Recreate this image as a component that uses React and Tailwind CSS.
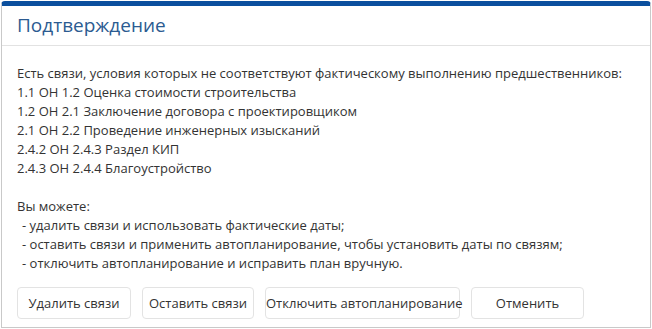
export default function App() {
  const links = [
    "1.1 ОН 1.2 Оценка стоимости строительства",
    "1.2 ОН 2.1 Заключение договора с проектировщиком",
    "2.1 ОН 2.2 Проведение инженерных изысканий",
    "2.4.2 ОН 2.4.3 Раздел КИП",
    "2.4.3 ОН 2.4.4 Благоустройство",
  ];
  const options = [
    "- удалить связи и использовать фактические даты;",
    "- оставить связи и применить автопланирование, чтобы установить даты по связям;",
    "- отключить автопланирование и исправить план вручную.",
  ];
  const btn =
    "h-[32px] rounded-[4px] border border-[#e3e3e3] bg-white text-[13px] text-[#333] whitespace-nowrap";
  return (
    <div
      className="w-[652px] h-[329px] bg-white p-[1px]"
      style={{ fontFamily: '"Open Sans", "Noto Sans", sans-serif' }}
    >
      <div className="h-[327px] border border-t-[5px] border-[#c9c9c9] border-t-[#0b4f9e] rounded-t-[4px] flex flex-col">
        <div className="h-[40px] flex items-center px-[15px] border-b border-[#e2e2e2] text-[19px] text-[#2b5b91]">
          Подтверждение
        </div>
        <div className="flex-1 px-[15px] pt-[18px] text-[13px] leading-[19px] text-[#333]">
          <div>Есть связи, условия которых не соответствуют фактическому выполнению предшественников:</div>
          {links.map((l) => (
            <div key={l}>{l}</div>
          ))}
          <div className="h-[19px]" />
          <div>Вы можете:</div>
          {options.map((o) => (
            <div key={o} className="pl-[5px]">{o}</div>
          ))}
          <div className="flex gap-[11px] mt-[14px]">
            <button className={btn + " w-[114px]"}>Удалить связи</button>
            <button className={btn + " w-[112px]"}>Оставить связи</button>
            <button className={btn + " w-[195px]"}>Отключить автопланирование</button>
            <button className={btn + " w-[113px]"}>Отменить</button>
          </div>
        </div>
      </div>
    </div>
  );
}
